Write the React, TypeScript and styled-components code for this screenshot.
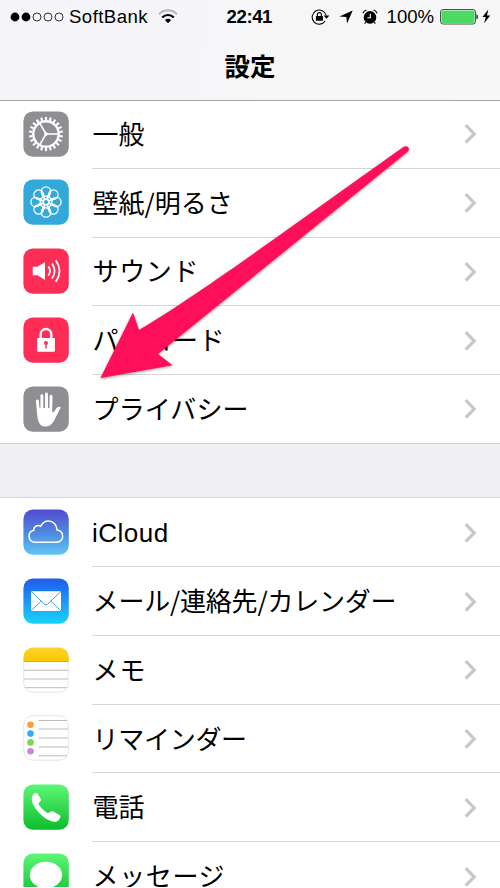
import React from 'react';
import styled, { createGlobalStyle } from 'styled-components';

const GlobalStyle = createGlobalStyle`
  body { margin: 0; background: #fff; overflow: hidden; }
  * { box-sizing: border-box; }
`;

const Screen = styled.div`
  position: relative;
  width: 500px;
  height: 887px;
  overflow: hidden;
  background: #fff;
  color: #000;
  font-family: 'Liberation Sans', 'Noto Sans CJK JP', sans-serif;
`;

const Header = styled.header`
  height: 100px;
  background: linear-gradient(100deg, #f4f4fa 0%, #f6f6f8 45%, #f7f7f7 100%);
`;

const HeaderLine = styled.div`
  height: 1px;
  margin-bottom: -1px;
  background: #a5a5a8;
`;

const StatusBar = styled.div`
  display: grid;
  grid-template-columns: 226.5px 84.5px 1fr;
  height: 33px;
  align-items: center;
  font-size: 18.6px;
  line-height: 33px;
`;

const StatusGroup = styled.div<{ $left?: number }>`
  display: flex;
  align-items: center;
  height: 33px;
  padding-left: ${(p) => p.$left ?? 0}px;
  svg { display: block; flex: none; }
`;

const StatusText = styled.span<{ $spacing?: number; $gap?: number }>`
  letter-spacing: ${(p) => p.$spacing ?? 0}px;
  margin-left: ${(p) => p.$gap ?? 0}px;
  white-space: nowrap;
`;

const Clock = styled.span`
  font-weight: 700;
  font-size: 18.6px;
  letter-spacing: -0.4px;
`;

const Title = styled.h1`
  margin: 0;
  height: 67px;
  text-align: center;
  font: 700 25.5px/64px 'Noto Sans CJK JP', sans-serif;
`;

const Group = styled.ul`
  margin: 0;
  padding: 0;
  list-style: none;
`;

const Divider = styled.div`
  height: 55.4px;
  background: #efeff4;
  border-top: 1px solid #d0d0d4;
  border-bottom: 1px solid #d6d6da;
  margin-top: -0.75px;
`;

const Row = styled.li`
  display: flex;
  align-items: center;
  height: 68.75px;
  padding-left: 23px;
`;

const IconTile = styled.svg`
  display: block;
  flex: none;
  width: 46px;
  height: 46px;
  margin-top: -1.3px;
`;

const RowBody = styled.div<{ $line: boolean }>`
  display: flex;
  flex: 1;
  align-items: center;
  justify-content: space-between;
  height: 100%;
  margin-left: 23px;
  padding-right: 23.4px;
  border-bottom: 1px solid ${(p) => (p.$line ? '#d6d6d9' : 'transparent')};
`;

const Label = styled.span<{ $spacing: number; $latin?: boolean }>`
  font-size: 26px;
  line-height: 36px;
  font-family: ${(p) => (p.$latin ? "'Liberation Sans'" : "'Noto Sans CJK JP'")}, sans-serif;
  font-weight: 400;
  letter-spacing: ${(p) => p.$spacing}px;
  padding-left: ${(p) => (p.$latin ? 0 : 0.6)}px;
  margin-bottom: ${(p) => (p.$latin ? -2 : 2)}px;
  white-space: nowrap;
`;

const ArrowOverlay = styled.svg`
  position: absolute;
  left: 0;
  top: 0;
  pointer-events: none;
  filter: drop-shadow(0 1px 1.5px rgba(0, 0, 0, 0.4));
`;

const Signal = () => (
  <svg width="54" height="12" viewBox="0 0 54 12">
    {[0, 1, 2, 3, 4].map((i) => (
      <circle key={i} cx={5 + i * 11} cy="6" r={i < 2 ? 4.4 : 4} fill={i < 2 ? '#000' : 'none'} stroke="#000" strokeWidth={i < 2 ? 0 : 0.8} />
    ))}
  </svg>
);

const Wifi = () => (
  <svg width="20" height="15" viewBox="0 0 20 15" fill="none">
    <path d="M1 5.2C6-.1 14-.1 19 5.2" stroke="#b5b5b8" strokeWidth="2.1" />
    <path d="M4.2 8.5C7.5 5.1 12.5 5.1 15.8 8.5" stroke="#000" strokeWidth="2.1" />
    <path d="M6.9 11.1C8.7 9.4 11.3 9.4 13.1 11.1L10 14.2Z" fill="#000" />
  </svg>
);

const RotationLock = () => (
  <svg width="19" height="16" viewBox="0 0 19 16" fill="none">
    <path d="M14.2 12A7.1 7.1 0 1 1 15.2 6.5" stroke="#000" strokeWidth="1.1" />
    <path d="M12.6 6.5H18.4L15.5 9.8Z" fill="#000" />
    <rect x="4.9" y="6.9" width="7" height="4.8" rx=".5" fill="#000" />
    <path d="M6.4 7V5.6a2 2 0 0 1 4 0V7" stroke="#000" strokeWidth="1.1" />
  </svg>
);

const Location = () => (
  <svg width="14" height="14" viewBox="0 0 14 14">
    <path d="M13.7.4 8 13.6 7.4 7 .4 6.6Z" fill="#000" />
  </svg>
);

const Alarm = () => (
  <svg width="16" height="16" viewBox="0 0 16 16" fill="none">
    <circle cx="8" cy="8.4" r="6.3" fill="#000" />
    <path d="M.9 4.3A5.3 5.3 0 0 1 4.5 1M11.5 1a5.3 5.3 0 0 1 3.6 3.3M4 13l-1.4 1.6M12 13l1.4 1.6" stroke="#000" strokeWidth="1.1" />
    <path d="M8.3 4.8V8.7H5.4" stroke="#fff" strokeWidth="1.1" />
  </svg>
);

const Battery = () => (
  <svg width="39" height="16" viewBox="0 0 39 16">
    <rect x=".5" y=".5" width="35" height="14.5" rx="2.5" fill="#fff" stroke="#222" strokeWidth=".8" />
    <rect x="1.4" y="1.4" width="33.2" height="12.7" rx="1.6" fill="#4cd964" />
    <path d="M36.5 5.2c1.8.5 1.8 4.6 0 5.1Z" fill="#000" />
  </svg>
);

const Bolt = () => (
  <svg width="9" height="15" viewBox="0 0 9 15">
    <path d="M6.3.5.5 8h3.3L2.1 14.3 8.3 6.4H5Z" fill="#000" />
  </svg>
);

const Chevron = () => (
  <svg width="13" height="21" viewBox="0 0 13 21">
    <path d="M1.7 2.2 10.2 10.9 1.7 19.6" fill="none" stroke="#c7c7cc" strokeWidth="3.2" />
  </svg>
);

const Tile = ({ fill }: { fill: string }) => <rect x=".4" y=".4" width="45.4" height="45.4" rx="9.5" fill={fill} />;

const spin = (n: number) => Array.from({ length: n }, (_, i) => (i * 360) / n);

const General = () => (
  <IconTile viewBox="0 0 46 46">
    <Tile fill="#8e8e93" />
    <g stroke="#fff" fill="none">
      {spin(22).map((a) => (
        <path key={a} d="M23 9.4 23 5.9" strokeWidth="2.1" transform={`rotate(${a} 23 23)`} />
      ))}
      <circle cx="23" cy="23" r="12.7" strokeWidth="2.4" />
      {[90, 210, 330].map((a) => (
        <path key={a} d="M23 23V10.5" strokeWidth="1.6" transform={`rotate(${a} 23 23)`} />
      ))}
    </g>
    <circle cx="23" cy="23" r="1.8" fill="#fff" />
  </IconTile>
);

const Wallpaper = () => (
  <IconTile viewBox="0 0 46 46">
    <Tile fill="#32a8db" />
    <g stroke="#fff" fill="none" strokeWidth="1.35">
      {spin(8).map((a) => (
        <circle key={a} cx="23" cy="12.6" r="4.7" transform={`rotate(${a} 23 23)`} />
      ))}
      {spin(8).map((a) => (
        <path key={a} d="M19 14.8Q20 19.6 23 20.2Q26 19.6 27 14.8" strokeWidth="1.15" transform={`rotate(${a} 23 23)`} />
      ))}
      <circle cx="23" cy="23" r="2.8" />
    </g>
  </IconTile>
);

const Sound = () => (
  <IconTile viewBox="0 0 46 46">
    <Tile fill="#ff2d55" />
    <path d="M9.7 18.8h4.8L22 14V32L14.5 27.2H9.7Z" fill="#fff" />
    <g stroke="#fff" fill="none" strokeWidth="1.8">
      <path d="M25.3 18.4Q28.8 23 25.3 27.6" />
      <path d="M29 15.4Q34.2 23 29 30.6" />
      <path d="M32.8 12.2Q40.3 23 32.8 33.8" />
    </g>
  </IconTile>
);

const Passcode = () => (
  <IconTile viewBox="0 0 46 46">
    <Tile fill="#ff2d55" />
    <path d="M17.7 21.5V17.3a5.3 5.3 0 0 1 10.6 0V21.5" stroke="#fff" strokeWidth="2.4" fill="none" />
    <rect x="14.1" y="21" width="17.8" height="13.8" rx=".7" fill="#fff" />
    <circle cx="23" cy="26" r="2" fill="#ff2d55" />
    <path d="M23 26v5.4" stroke="#ff2d55" strokeWidth="1.4" />
  </IconTile>
);

const Privacy = () => (
  <IconTile viewBox="0 0 46 46">
    <Tile fill="#8e8e93" />
    <g stroke="#fff" strokeWidth="2.9" strokeLinecap="round">
      <path d="M14.4 15 15.4 27M18.9 9.6V25M23.5 7.9V25M28.1 10.2 27.7 25" />
    </g>
    <path d="M13.9 24.5C14.1 21 17 22 20 22h6.8c1.6 0 2.4 1.4 2.5 4.1.9.8 2.1-.6 3.4-2.9 1.2-1.9 2.5-3 4.4-2.3.9.4.4 1.1-.1 2.1l-4.9 9.6c-2.2 4.6-4.7 8-9.5 8-6.1 0-8.2-4.7-8.7-16.1Z" fill="#fff" />
  </IconTile>
);

const Cloud = () => (
  <IconTile viewBox="0 0 46 46">
    <defs>
      <linearGradient id="cloud" x2="0" y2="1"><stop stopColor="#524bd1" /><stop offset=".5" stopColor="#4e87dd" /><stop offset="1" stopColor="#60c5f5" /></linearGradient>
    </defs>
    <Tile fill="url(#cloud)" />
    <path d="M12.1 33.2C8.5 33.2 6 30.5 6 27.3c0-3.3 1.9-5.4 4.8-6.1-.3-3.5 3.8-5.9 6.8-3.8 1.8-3.5 4.4-5.3 7.7-5.3 5.2 0 8.7 3.8 8.7 9 3.5.5 5.7 2.9 5.7 6.2 0 3.4-2.6 5.9-6 5.9Z" fill="none" stroke="#fff" strokeWidth="1.5" strokeLinejoin="round" />
  </IconTile>
);

const Mail = () => (
  <IconTile viewBox="0 0 46 46">
    <defs>
      <linearGradient id="mail" x2="0" y2="1"><stop stopColor="#1f5cec" /><stop offset=".5" stopColor="#1d96f3" /><stop offset="1" stopColor="#18d5fb" /></linearGradient>
    </defs>
    <Tile fill="url(#mail)" />
    <rect x="8" y="13.2" width="30" height="19.8" rx=".7" fill="#fff" />
    <path d="M8.2 13.5 21.4 26.2Q23 27.7 24.6 26.2L37.8 13.5M8.2 32.7 18.2 23.1M37.8 32.7 27.8 23.1" fill="none" stroke="#3da0ec" strokeWidth="1" />
  </IconTile>
);

const Notes = () => (
  <IconTile viewBox="0 0 46 46">
    <defs>
      <linearGradient id="notes" x2="0" y2="1"><stop stopColor="#fbd42f" /><stop offset="1" stopColor="#fcc800" /></linearGradient>
      <clipPath id="notesClip"><rect x=".4" y=".4" width="45.4" height="45.4" rx="9.5" /></clipPath>
    </defs>
    <g clipPath="url(#notesClip)">
      <rect width="46" height="46" fill="#fff" />
      <rect width="46" height="14" fill="url(#notes)" />
      <path d="M0 14.5H46" stroke="#b7aa83" strokeWidth="1" />
      <path d="M0 23.3H46M0 32H46M0 40.7H46" stroke="#bdbdbd" strokeWidth="1" />
    </g>
    <path d="M.8 14V36a9 9 0 0 0 9 9.2H36.2a9 9 0 0 0 9-9.2V14" fill="none" stroke="#deded8" strokeWidth=".8" />
  </IconTile>
);

const Reminders = () => (
  <IconTile viewBox="0 0 46 46">
    <rect x=".8" y=".8" width="44.6" height="44.4" rx="9" fill="#fff" stroke="#dedede" strokeWidth=".8" />
    <path d="M15.5 5.5H44M15.5 14H45M15.5 23H45M15.5 32H45M15.5 40.8H44" stroke="#bdbdbd" strokeWidth="1" />
    {['#ff9c34', '#39a9f5', '#7bd650', '#c886dd'].map((c, i) => (
      <circle key={c} cx="7.5" cy={9.8 + i * 8.8} r="3.3" fill={c} />
    ))}
  </IconTile>
);

const GreenDefs = ({ id }: { id: string }) => (
  <defs>
    <linearGradient id={id} x2="0" y2="1"><stop stopColor="#5df777" /><stop offset="1" stopColor="#0cbd2b" /></linearGradient>
  </defs>
);

const Phone = () => (
  <IconTile viewBox="0 0 46 46">
    <GreenDefs id="phone" />
    <Tile fill="url(#phone)" />
    <path d="M9.2 12.4C10.4 9.6 12.8 7.8 14.3 9.3l3.2 5.2c.9 1.5.3 2.7-1.3 4-1 .8-.8 1.7.2 3.1 1.8 2.6 4.4 5.1 7.5 7.1 1.1.7 1.9.5 2.9-.6 1-1.1 2.3-1.2 3.5-.5l6.3 3.4c1.3.9 1.1 2.2.1 3.7-1.5 2.4-3.6 3.5-6.4 3-5-.9-9.8-4.2-14.3-8.9C11.8 24.3 7.3 16.5 9.2 12.4Z" fill="#fff" />
  </IconTile>
);

const Messages = () => (
  <IconTile viewBox="0 0 46 46">
    <GreenDefs id="messages" />
    <Tile fill="url(#messages)" />
    <path d="M23 8.8C13.8 8.8 6.8 14.8 6.8 22c0 5 3.3 9.2 8 11.5-.3 2-1.4 3.8-3 5 3 0 5.4-1.3 7.3-3.6 12.2 1.8 20.1-5.3 20.1-12.9 0-7.2-7-13.2-16.2-13.2Z" fill="#fff" />
  </IconTile>
);

type Item = { icon: React.ComponentType; label: string; spacing?: number; latin?: boolean };

const deviceItems: Item[] = [
  { icon: General, label: '一般' },
  { icon: Wallpaper, label: '壁紙/明るさ' },
  { icon: Sound, label: 'サウンド', spacing: 0.6 },
  { icon: Passcode, label: 'パスコード', spacing: 0.5 },
  { icon: Privacy, label: 'プライバシー', spacing: 0.1 },
];

const appItems: Item[] = [
  { icon: Cloud, label: 'iCloud', latin: true, spacing: 0.5 },
  { icon: Mail, label: 'メール/連絡先/カレンダー', spacing: -0.2 },
  { icon: Notes, label: 'メモ', spacing: 0.8 },
  { icon: Reminders, label: 'リマインダー', spacing: -0.3 },
  { icon: Phone, label: '電話' },
  { icon: Messages, label: 'メッセージ', spacing: 0.6 },
];

const SettingsGroup = ({ items }: { items: Item[] }) => (
  <Group>
    {items.map(({ icon: Icon, label, spacing, latin }, i) => (
      <Row key={label}>
        <Icon />
        <RowBody $line={i < items.length - 1}>
          <Label $spacing={spacing ?? 0} $latin={latin}>{label}</Label>
          <Chevron />
        </RowBody>
      </Row>
    ))}
  </Group>
);

export default function App() {
  return (
    <Screen>
      <GlobalStyle />
      <Header>
        <StatusBar>
          <StatusGroup $left={9.5}>
            <Signal />
            <StatusText $gap={5.5} $spacing={0.45}>SoftBank</StatusText>
            <StatusText $gap={9.5}><Wifi /></StatusText>
          </StatusGroup>
          <Clock>22:41</Clock>
          <StatusGroup>
            <RotationLock />
            <StatusText $gap={9}><Location /></StatusText>
            <StatusText $gap={9}><Alarm /></StatusText>
            <StatusText $gap={8.6}>100%</StatusText>
            <StatusText $gap={5.8}><Battery /></StatusText>
            <StatusText $gap={3}><Bolt /></StatusText>
          </StatusGroup>
        </StatusBar>
        <Title>設定</Title>
      </Header>
      <HeaderLine />
      <SettingsGroup items={deviceItems} />
      <Divider />
      <SettingsGroup items={appItems} />
      <ArrowOverlay width="500" height="887" viewBox="0 0 500 887">
        <path d="M100.5 378 133 312.5 139 330C200 294 282 233 403.8 146.8C407.2 144.8 410.6 148.4 407.9 151.6L158 354L172.5 365.3Z" fill="#ff0f59" />
      </ArrowOverlay>
    </Screen>
  );
}
